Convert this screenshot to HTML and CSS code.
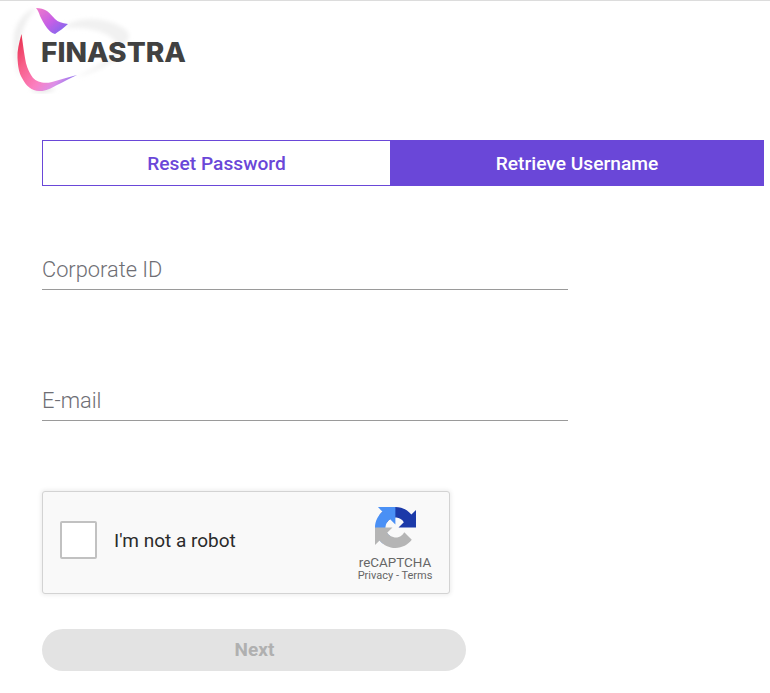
FILE: index.html
```html
<!DOCTYPE html>
<html lang="en">
<head>
<meta charset="utf-8">
<title>Finastra</title>
<link rel="stylesheet" href="styles.css">
</head>
<body>
<header class="logo-bar">
  <svg class="logo" width="200" height="99" viewBox="0 0 200 99">
    <defs>
      <linearGradient id="top" x1="0" y1="0" x2="1" y2="1">
        <stop offset="0" stop-color="#f07ac8"/>
        <stop offset=".5" stop-color="#c65fe6"/>
        <stop offset="1" stop-color="#6f6af0"/>
      </linearGradient>
      <linearGradient id="bottom" gradientUnits="userSpaceOnUse" x1="20" y1="34" x2="76" y2="80">
        <stop offset="0" stop-color="#e8304f"/>
        <stop offset=".3" stop-color="#f8608a"/>
        <stop offset=".6" stop-color="#fb7fc0"/>
        <stop offset=".8" stop-color="#dc8fe8"/>
        <stop offset="1" stop-color="#7d6cf0"/>
      </linearGradient>
      <filter id="soft" x="-20%" y="-20%" width="140%" height="140%"><feGaussianBlur stdDeviation="0.45"/></filter>
      <filter id="halo" x="-30%" y="-30%" width="160%" height="160%"><feGaussianBlur stdDeviation="2.2"/></filter>
    </defs>
    <path d="M33 8C24 12 16 22 14 34C13 48 15 66 20 80C18 64 18 50 21 36C24 24 28 15 36 8Z" fill="#efefef" filter="url(#halo)"/>
    <path d="M66 24C78 17 96 16 110 21C122 25 130 30 129 36C128 41 124 44 118 45C115 38 108 33 98 30C88 27 78 26 66 27Z" fill="#f1f1f1" filter="url(#halo)"/>
    <path d="M120 44C112 56 94 68 76 76C90 73 106 66 116 58C120 54 122 48 120 44Z" fill="#f3f3f3" filter="url(#halo)"/>
    <path d="M30 88C36 92 46 93 56 88L44 86Z" fill="#e6e6e6" filter="url(#halo)"/>
    <path d="M36 7C40 7 44 8 47 10C50 12 52 15 55 18C58 21 62 22 68 23C64 27 59 30 55 33C51 32 49 29 47 27C44 23 42 19 40 15C39 12 38 9 36 7Z" fill="url(#top)" filter="url(#soft)"/>
    <path d="M21.5 33C19 42 17 50 17.5 57C18 66 19 72 22 77C26 85 32 90 39 90C45 90.5 51 87.5 56 84.5C64 81 70 77 77 74C68 76 60 79 52 81C48 82 45 82 42 81.5C37 80.5 33 78 31 74C28 69 26 64 25 57C23.5 48 22.5 40 21.5 33Z" fill="url(#bottom)" filter="url(#soft)"/>
    <text class="logo-word" x="41" y="61" textLength="145" lengthAdjust="spacingAndGlyphs">FINASTRA</text>
  </svg>
</header>
<main class="content">
  <nav class="tabs">
    <a class="tab tab-outline">Reset Password</a>
    <a class="tab tab-active">Retrieve Username</a>
  </nav>
  <div class="field field-first"><span class="field-label">Corporate ID</span></div>
  <div class="field field-second"><span class="field-label">E-mail</span></div>
  <section class="captcha">
    <span class="captcha-box"></span>
    <span class="captcha-text">I'm not a robot</span>
    <div class="captcha-brand">
      <svg class="captcha-icon" width="41" height="41" viewBox="0 0 64 64">
        <path d="M64 31.955l-.033-1.37V4.687l-7.16 7.16C50.948 4.674 42.033.093 32.05.093c-10.4 0-19.622 4.96-25.458 12.64l11.736 11.86a15.55 15.55 0 0 1 4.754-5.334c2.05-1.6 4.952-2.906 8.968-2.906.485 0 .86.057 1.135.163 4.976.393 9.288 3.14 11.828 7.124l-8.307 8.307c10.522-.04 22.4-.066 27.295.005" fill="#1c3aa9"/>
        <path d="M31.862.094l-1.37.033H4.594l7.16 7.16C4.58 13.147 0 22.06 0 32.046c0 10.4 4.96 19.622 12.64 25.458l11.86-11.736a15.55 15.55 0 0 1-5.334-4.754c-1.6-2.05-2.906-4.952-2.906-8.968 0-.485.057-.86.163-1.135.393-4.976 3.14-9.288 7.124-11.828l8.307 8.307c-.04-10.522-.066-22.4.005-27.295" fill="#4a90f5"/>
        <path d="M.001 32.045l.033 1.37v25.898l7.16-7.16c5.86 7.173 14.774 11.754 24.76 11.754 10.4 0 19.622-4.96 25.458-12.64L45.676 39.407a15.55 15.55 0 0 1-4.754 5.334c-2.05 1.6-4.952 2.906-8.968 2.906-.485 0-.86-.057-1.135-.163-4.976-.393-9.288-3.14-11.828-7.124l8.307-8.307c-10.522.04-22.4.066-27.295-.005" fill="#b5b5b5"/>
      </svg>
      <span class="captcha-name">reCAPTCHA</span>
      <span class="captcha-links">Privacy - Terms</span>
    </div>
  </section>
  <button class="next" type="button">Next</button>
</main>
</body>
</html>
```
FILE: styles.css
```css
* { box-sizing: border-box; }
html, body { margin: 0; padding: 0; }
body {
  width: 770px;
  height: 693px;
  overflow: hidden;
  background: #fff;
  border-top: 1px solid #dcdcdc;
  font-family: Roboto, "Liberation Sans", sans-serif;
}
.logo-bar { height: 139px; }
.logo { display: block; }
.logo-word {
  font-family: Inter, "Liberation Sans", sans-serif;
  font-weight: 800;
  font-size: 27px;
  fill: #414141;
}
.content { padding-left: 42px; }
.tabs { display: flex; width: 722px; height: 46px; }
.tab {
  display: flex;
  align-items: center;
  justify-content: center;
  font-size: 19.2px;
  font-weight: 500;
}
.tab-outline {
  width: 348px;
  border: 1px solid #6a47d8;
  border-right: 0;
  color: #6a47d8;
}
.tab-active {
  width: 374px;
  background: #6a47d8;
  color: #fff;
}
.field {
  width: 526px;
  height: 40px;
  border-bottom: 1px solid #9a9a9a;
  display: flex;
  align-items: flex-end;
  padding-bottom: 6px;
}
.field-first { margin-top: 64px; }
.field-second { margin-top: 91px; }
.field-label {
  font-size: 21.8px;
  font-weight: 300;
  line-height: 26px;
  color: #6e6e74;
}
.captcha {
  display: flex;
  align-items: center;
  width: 408px;
  height: 103px;
  margin-top: 70px;
  padding-left: 17px;
  padding-bottom: 5px;
  background: #f9f9f9;
  border: 1px solid #d3d3d3;
  border-radius: 3px;
  box-shadow: 0 0 4px 1px rgba(0, 0, 0, 0.08);
}
.captcha-box {
  width: 37px;
  height: 38px;
  background: #fff;
  border: 2px solid #c1c1c1;
  border-radius: 2px;
}
.captcha-text {
  margin-left: 17px;
  font-size: 19px;
  color: #2b2b2b;
}
.captcha-brand {
  display: flex;
  flex-direction: column;
  align-items: center;
  width: 76px;
  margin-left: auto;
  margin-right: 16px;
  margin-bottom: -8px;
}
.captcha-icon { display: block; margin-bottom: 7px; }
.captcha-name { font-size: 13.4px; line-height: 15px; color: #666; }
.captcha-links { font-size: 11px; line-height: 12px; color: #666; white-space: nowrap; }
.next {
  display: block;
  width: 424px;
  height: 42px;
  margin-top: 35px;
  padding: 0 0 2px 1px;
  border: 0;
  border-radius: 21px;
  background: #e3e3e3;
  color: #b0b0b0;
  font-family: Roboto, "Liberation Sans", sans-serif;
  font-size: 19px;
  font-weight: 700;
}
```
